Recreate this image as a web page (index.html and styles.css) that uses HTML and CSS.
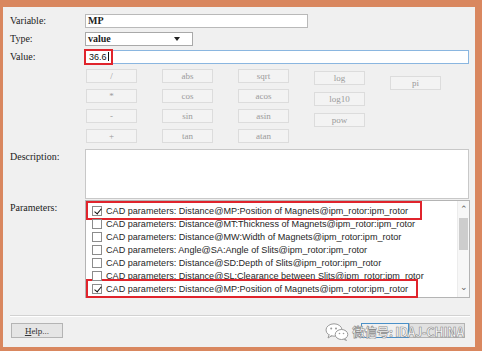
FILE: index.html
```html
<!DOCTYPE html>
<html lang="en">
<head>
    <meta charset="UTF-8">
    <title>Edit Design Variable</title>
    <link rel="stylesheet" href="styles.css">
</head>
<body>

<div class="window">
    <div class="field-row first">
        <label>Variable:</label>
        <div class="box var-box"><b>MP</b></div>
    </div>

    <div class="field-row">
        <label>Type:</label>
        <div class="box type-box">
            <b>value</b>
            <span class="arrow"></span>
        </div>
    </div>

    <div class="field-row">
        <label>Value:</label>
        <div class="box value-box"><span class="mark">36.6<i class="caret"></i></span></div>
    </div>

    <div class="keys">
        <div class="key-col">
            <div class="key">/</div>
            <div class="key">*</div>
            <div class="key">-</div>
            <div class="key">+</div>
        </div>
        <div class="key-col">
            <div class="key">abs</div>
            <div class="key">cos</div>
            <div class="key">sin</div>
            <div class="key">tan</div>
        </div>
        <div class="key-col">
            <div class="key">sqrt</div>
            <div class="key">acos</div>
            <div class="key">asin</div>
            <div class="key">atan</div>
        </div>
        <div class="key-col col4">
            <div class="key">log</div>
            <div class="key">log10</div>
            <div class="key">pow</div>
        </div>
        <div class="key-col col5">
            <div class="key">pi</div>
        </div>
    </div>

    <div class="field-row desc-row">
        <label>Description:</label>
        <div class="box desc-box"></div>
    </div>

    <div class="field-row param-row">
        <label>Parameters:</label>
        <div class="list">
            <div class="rows">
                <div class="row marked wide"><span class="check on"></span>CAD parameters: Distance@MP:Position of Magnets@ipm_rotor:ipm_rotor</div>
                <div class="row"><span class="check"></span>CAD parameters: Distance@MT:Thickness of Magnets@ipm_rotor:ipm_rotor</div>
                <div class="row"><span class="check"></span>CAD parameters: Distance@MW:Width of Magnets@ipm_rotor:ipm_rotor</div>
                <div class="row"><span class="check"></span>CAD parameters: Angle@SA:Angle of Slits@ipm_rotor:ipm_rotor</div>
                <div class="row"><span class="check"></span>CAD parameters: Distance@SD:Depth of Slits@ipm_rotor:ipm_rotor</div>
                <div class="row"><span class="check"></span>CAD parameters: Distance@SL:Clearance between Slits@ipm_rotor:ipm_rotor</div>
                <div class="row marked"><span class="check on"></span>CAD parameters: Distance@MP:Position of Magnets@ipm_rotor:ipm_rotor</div>
            </div>
            <div class="scrollbar">
                <span class="sb-arrow">&#8963;</span>
                <span class="thumb"></span>
                <span class="sb-arrow down">&#8964;</span>
            </div>
        </div>
    </div>

    <div class="separator"></div>

    <div class="footer">
        <button class="btn help"><u>H</u>elp...</button>
        <div class="right-btns">
            <button class="btn ok"></button>
            <button class="btn cancel"></button>
        </div>
        <div class="watermark">
            <svg class="wechat" width="24" height="18" viewBox="0 0 24 18">
                <ellipse cx="9" cy="7" rx="8" ry="6.2" fill="#fff" stroke="#9a9a9a" stroke-width="1"/>
                <path d="M4 12 L3 15 L7 12.6" fill="#fff" stroke="#9a9a9a" stroke-width="1"/>
                <ellipse cx="16.5" cy="11.5" rx="6.3" ry="5" fill="#fff" stroke="#9a9a9a" stroke-width="1"/>
                <path d="M20 15.5 L21.5 17.5 L18.5 16.2" fill="#fff" stroke="#9a9a9a" stroke-width="1"/>
                <circle cx="6.2" cy="5.5" r="1" fill="#9a9a9a"/>
                <circle cx="11" cy="5.5" r="1" fill="#9a9a9a"/>
                <circle cx="14.5" cy="10.5" r="0.8" fill="#9a9a9a"/>
                <circle cx="18.5" cy="10.5" r="0.8" fill="#9a9a9a"/>
            </svg>
            <span class="wm-text">微信号: IDAJ-CHINA</span>
        </div>
    </div>
</div>

</body>
</html>
```

FILE: styles.css
```css
* {
    box-sizing: border-box;
}
body {
    margin: 0;
    background: #d9875f;
}
.window {
    width: 482px;
    height: 351px;
    background: #f0f0f0;
    border-style: solid;
    border-color: #d9875f;
    border-width: 7px 7px 4px 3px;
    padding: 0 5px 0 7px;
    font-family: "Liberation Serif", serif;
    font-size: 10px;
    color: #222;
}
.field-row {
    display: flex;
    margin-top: 4px;
}
.field-row.first {
    margin-top: 7px;
}
.field-row label {
    width: 75px;
    line-height: 14px;
    flex: none;
}
.box {
    height: 14px;
    background: #fff;
    border: 1px solid #b9b9b9;
    line-height: 12px;
    padding-left: 2px;
    position: relative;
}
.box b {
    font-weight: bold;
}
.var-box {
    width: 223px;
}
.type-box {
    width: 108px;
    border-color: #a9a9a9;
}
.type-box .arrow {
    position: absolute;
    right: 12px;
    top: 4px;
    border-left: 3px solid transparent;
    border-right: 3px solid transparent;
    border-top: 4px solid #222;
}
.value-box {
    width: 384px;
    border-color: #8ab6e0;
}
.mark {
    display: inline-block;
    height: 16px;
    margin: -2px 0 0 -4px;
    padding: 0 2px 0 3px;
    border: 2px solid #e0242c;
    font-family: "Liberation Sans", sans-serif;
    font-size: 9px;
    line-height: 12px;
    color: #111;
}
.caret {
    display: inline-block;
    width: 1px;
    height: 9px;
    margin-left: 1px;
    background: #111;
    vertical-align: -1px;
}
.keys {
    display: flex;
    gap: 25px;
    margin: 5px 0 0 76px;
    height: 75px;
}
.key-col {
    width: 51px;
    display: flex;
    flex-direction: column;
    gap: 6px;
}
.key-col.col4 {
    padding-top: 2px;
    gap: 7px;
}
.key-col.col5 {
    padding-top: 7px;
}
.key {
    height: 14px;
    background: #f3f3f3;
    border: 1px solid #dcdcdc;
    text-align: center;
    line-height: 12px;
    font-size: 9px;
    color: #9a9a9a;
}
.desc-row {
    margin-top: 5px;
}
.desc-row label {
    padding-top: 1px;
}
.desc-box {
    width: 384px;
    height: 50px;
    border-color: #c8c8c8;
}
.param-row {
    margin-top: 1px;
}
.param-row label {
    padding-top: 1px;
}
.list {
    width: 385px;
    height: 98px;
    background: #fff;
    border: 1px solid #b4b4b4;
    display: flex;
}
.rows {
    flex: 1;
    padding: 3px 0 0 3px;
}
.row {
    height: 13px;
    display: flex;
    align-items: center;
    padding-left: 3px;
    font-family: "Liberation Sans", sans-serif;
    font-size: 9.1px;
    color: #262626;
    white-space: nowrap;
}
.row.marked {
    width: 326px;
    outline: 2px solid #e0242c;
    outline-offset: 1px;
}
.row.marked.wide {
    width: 330px;
}
.check {
    width: 10px;
    height: 10px;
    border: 1px solid #8c8c8c;
    background: #fff;
    margin-right: 4px;
    flex: none;
    position: relative;
}
.check.on::after {
    content: "";
    position: absolute;
    left: 3px;
    top: 0;
    width: 3px;
    height: 6px;
    border-right: 1.5px solid #111;
    border-bottom: 1.5px solid #111;
    transform: rotate(40deg);
}
.scrollbar {
    width: 12px;
    display: flex;
    flex-direction: column;
    align-items: center;
    background: #f7f7f7;
    border-left: 1px solid #ececec;
}
.sb-arrow {
    height: 14px;
    font-size: 9px;
    line-height: 16px;
    color: #606060;
}
.sb-arrow.down {
    margin-top: auto;
    line-height: 8px;
}
.thumb {
    width: 9px;
    height: 32px;
    background: #cdcdcd;
    margin-top: 3px;
}
.separator {
    margin-top: 17px;
    height: 2px;
    width: 460px;
    border-top: 1px solid #d2d2d2;
    border-bottom: 1px solid #fff;
}
.footer {
    display: flex;
    justify-content: space-between;
    margin-top: 6px;
    position: relative;
}
.btn {
    height: 15px;
    padding: 0;
    background: #e5e5e5;
    border: 1px solid #b4b4b4;
    font-family: "Liberation Serif", serif;
    font-size: 9px;
    color: #333;
}
.help {
    width: 52px;
    margin-left: 1px;
}
.right-btns {
    display: flex;
    margin-right: 5px;
}
.ok {
    width: 48px;
    background: #f0f0f0;
    border-color: #4a90c8;
}
.cancel {
    width: 56px;
    background: #e1e1e1;
}
.watermark {
    position: absolute;
    right: 6px;
    top: -1px;
    display: flex;
    align-items: center;
    gap: 3px;
}
.wm-text {
    font-family: "Noto Sans CJK SC", sans-serif;
    font-size: 12.5px;
    font-weight: bold;
    color: #fff;
    -webkit-text-stroke: 0.6px #8a8a8a;
    letter-spacing: -0.3px;
}
```
